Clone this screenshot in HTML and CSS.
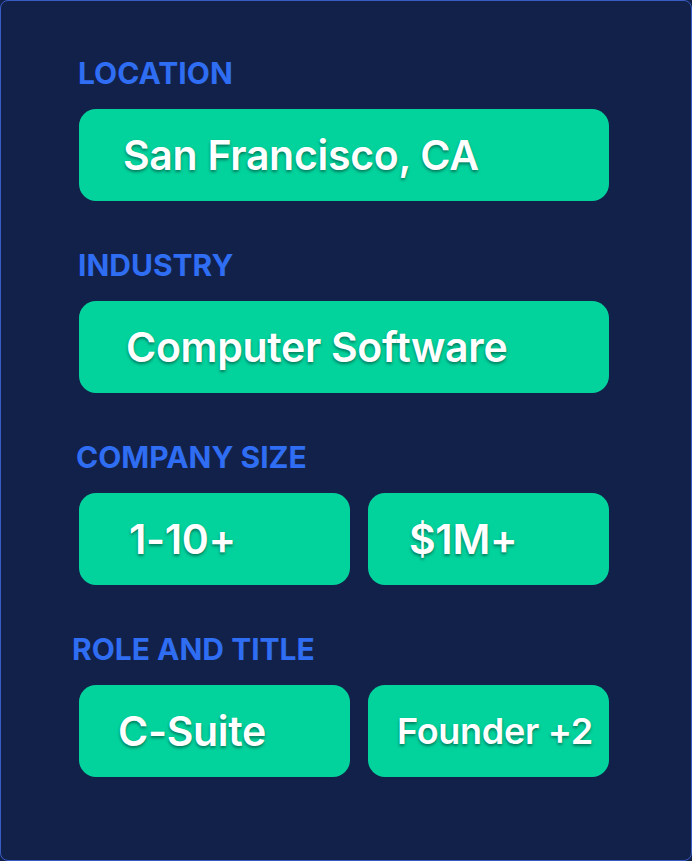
FILE: index.html
```html
<!DOCTYPE html>
<html>
<head>
<meta charset="utf-8">
<link rel="stylesheet" href="styles.css">
</head>
<body>
<div class="card">
  <section class="field">
    <div class="label">LOCATION</div>
    <div class="row">
      <div class="pill pill-full pad-a">San Francisco, CA</div>
    </div>
  </section>
  <section class="field">
    <div class="label">INDUSTRY</div>
    <div class="row">
      <div class="pill pill-full pad-b">Computer Software</div>
    </div>
  </section>
  <section class="field">
    <div class="label label-c">COMPANY SIZE</div>
    <div class="row">
      <div class="pill pill-left pad-c">1-10+</div>
      <div class="pill pill-right pad-d">$1M+</div>
    </div>
  </section>
  <section class="field">
    <div class="label label-d">ROLE AND TITLE</div>
    <div class="row">
      <div class="pill pill-left pad-e">C-Suite</div>
      <div class="pill pill-right pad-f small">Founder +2</div>
    </div>
  </section>
</div>
</body>
</html>
```
FILE: styles.css
```css
html, body {
  margin: 0;
  padding: 0;
  background: #12214a;
}
.card {
  box-sizing: border-box;
  width: 692px;
  height: 861px;
  border: 1px solid #3a5cc2;
  border-radius: 8px;
  background: #12214a;
  padding: 57px 0 0 78px;
  display: flex;
  flex-direction: column;
  gap: 49px;
  font-family: Inter, "Noto Sans", sans-serif;
}
.field {
  display: flex;
  flex-direction: column;
  gap: 21px;
}
.label {
  color: #2f6df2;
  font-weight: 700;
  font-size: 30px;
  line-height: 30px;
  letter-spacing: 0;
  margin-left: -1px;
}
.label-c { margin-left: -3px; }
.label-d { margin-left: -7px; }
.row {
  display: flex;
  gap: 18px;
}
.pill {
  box-sizing: border-box;
  height: 92px;
  border-radius: 17px;
  background: #02d39d;
  color: #ffffff;
  font-weight: 600;
  font-size: 41px;
  letter-spacing: -0.3px;
  display: flex;
  align-items: center;
  text-shadow: 0 2px 3px rgba(0, 40, 30, 0.5);
}
.pill-full { width: 530px; }
.pill-left { width: 271px; }
.pill-right { width: 241px; }
.pad-a { padding-left: 44px; }
.pad-b { padding-left: 47px; }
.pad-c { padding-left: 50px; }
.pad-d { padding-left: 41px; }
.pad-e { padding-left: 39px; }
.pad-f { padding-left: 29px; }
.small { font-size: 36px; }
```
